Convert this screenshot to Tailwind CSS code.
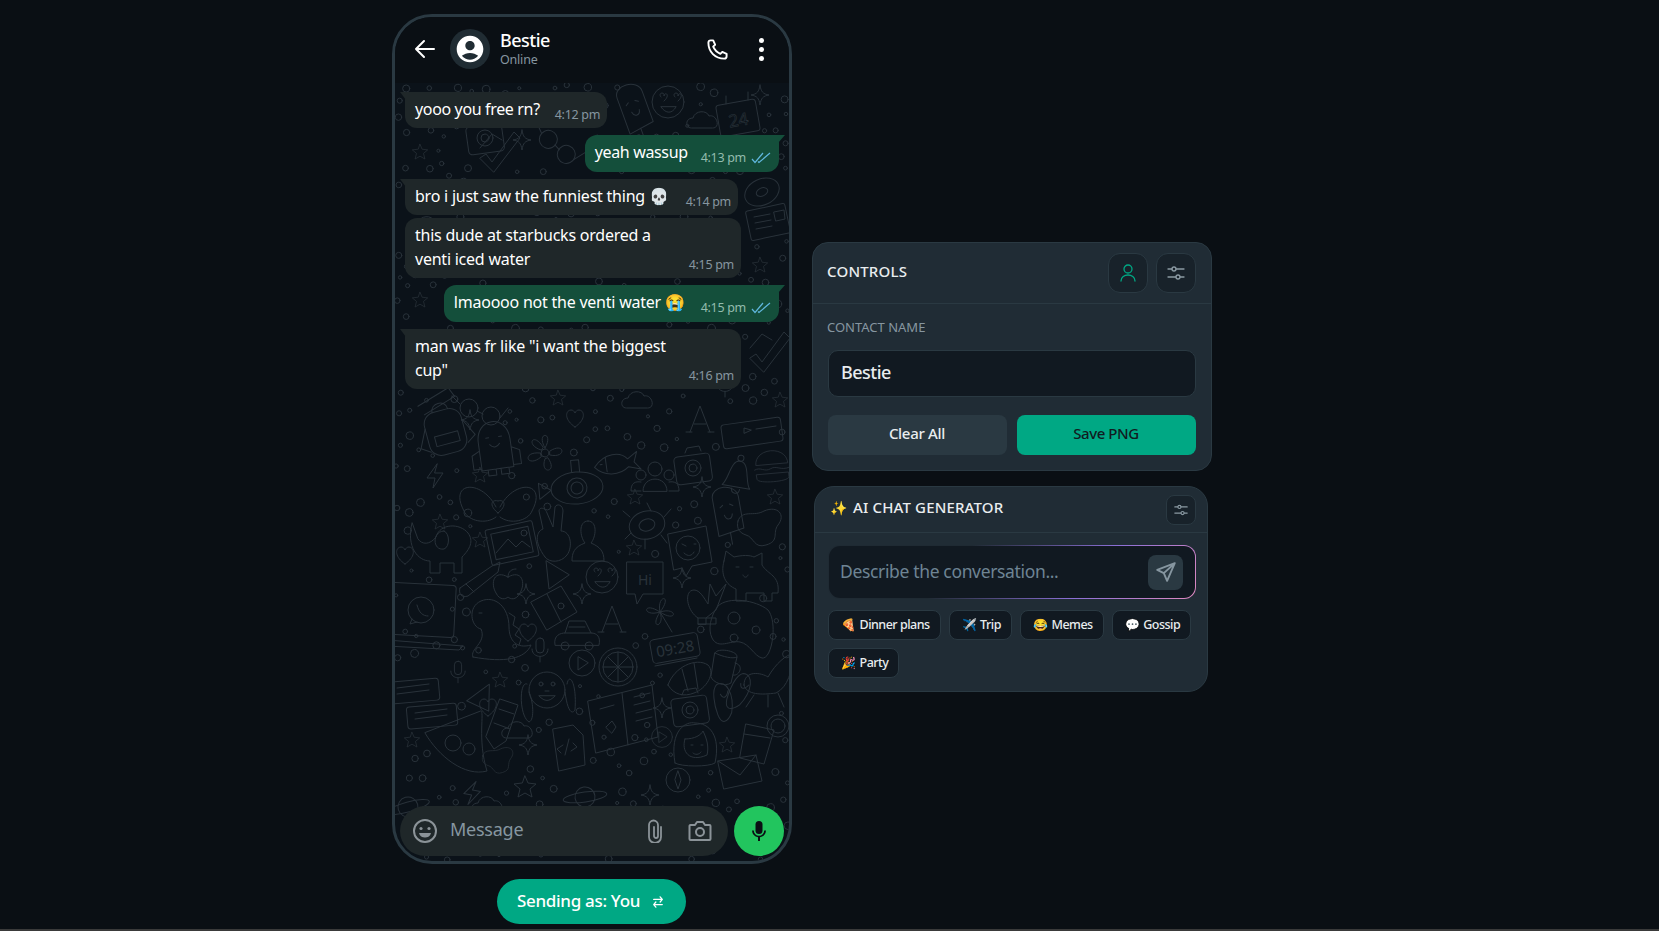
<!DOCTYPE html>
<html lang="en">
<head>
  <meta charset="UTF-8" />
  <meta name="viewport" content="width=device-width, initial-scale=1.0"/>
  <title>Fake Chat Generator</title>
  <script src="https://cdn.jsdelivr.net/npm/@tailwindcss/browser@4"></script>
</head>
<body class="bg-[#0a0f14] text-[#e9edef] font-['Noto_Sans',sans-serif] overflow-hidden">
  <div class="h-[929px] flex items-start gap-5 pl-[392px] pt-[14px]">

    <!-- Phone column -->
    <div class="w-[400px] flex flex-col">
      <div class="relative w-[400px] h-[850px] border-[3px] border-[#2a3942] rounded-[40px] overflow-hidden flex flex-col bg-[#0b1219]">
        <svg id="wallpaper" class="absolute inset-0" width="394" height="844" viewBox="395 17 394 844" fill="none" stroke="#29323a" stroke-width="1" stroke-linecap="round" stroke-linejoin="round">
          <defs>
            <g id="d-star"><path d="M0-11 3-4 11-3 5 2 7 10 0 6-7 10-5 2-11-3-3-4Z"/></g>
            <g id="d-spark"><path d="M0-10C1-3 3-1 9 0 3 1 1 3 0 10-1 3-3 1-9 0-3-1-1-3 0-10Z"/></g>
            <g id="d-heart"><path d="M0 9C-12 1-9-8-4-8-2-8-1-7 0-5 1-7 2-8 4-8 9-8 12 1 0 9Z"/></g>
            <g id="d-bag"><rect x="-19" y="-20" width="38" height="44" rx="12"/><path d="M-8-20C-8-30 8-30 8-20M-12 4H12V14H-12ZM-19-6-28 12-19 18M19-6 28 12 19 18M-20-30 14-40 18-30-16-20"/></g>
            <g id="d-ghost"><path d="M-16 22V-6C-16-32 16-32 16-6V22ZM-16 2-24 6V20L-16 20M16 2 24 6V20L16 20M-10 22V28H-2V22M3 22V28H11V22"/><path d="M-8-10H-5M5-10H8M-5-3C-2 1 2 1 5-3"/></g>
            <g id="d-flower"><path d="M0-5C-10-22 10-22 0-5ZM5-2C20-12 22 6 5 2ZM3 5C14 20-6 22 0 6ZM-4 4C-18 16-24-2-5 0ZM-4-3C-20-8-12-22-2-6Z"/><circle r="4"/></g>
            <g id="d-fish"><path d="M-18 2C-6-12 10-10 16-2L26-8 22 2 28 10 16 6C6 14-10 12-18 2ZM-6-6V8M-12 0H-10"/></g>
            <g id="d-people"><circle cy="-8" r="7"/><circle cx="-14" cy="-2" r="5"/><circle cx="14" cy="-2" r="5"/><path d="M-12 14C-12-2 12-2 12 14ZM-14 14H-24C-24 6-20 4-14 5M14 14H24C24 6 20 4 14 5"/></g>
            <g id="d-cam"><rect x="-18" y="-13" width="36" height="28" rx="4" transform="rotate(-8)"/><circle r="8"/><circle r="4"/><path d="M-8-15-6-20 6-22 8-17"/></g>
            <g id="d-burger"><path d="M-20-4C-20-26 20-26 20-4ZM-22 2C-14-2-10 6-2 2 6-2 10 6 22 2M-20 8H20V14C20 20-20 20-20 14Z"/></g>
            <g id="d-bell"><path d="M-14 12C-8 6-10-14 0-14 10-14 8 6 14 12ZM-4 14C-4 20 4 20 4 14"/><circle cy="-17" r="3"/></g>
            <g id="d-hands"><path d="M-2 4C-16-24-50-22-34 8-30 18-12 22-2 14M2 4C16-24 50-22 34 8 30 18 12 22 2 14"/><path d="M0 10C-10 2-6-4 0-2 6-4 10 2 0 10Z"/></g>
            <g id="d-sub"><ellipse rx="26" ry="16"/><circle r="10"/><circle r="6"/><path d="M-4-16V-28H4V-16M-26 0-38-8V8Z"/></g>
            <g id="d-pop"><path d="M-10 22V-16C-10-30 16-28 16-14V18ZM2 20V32"/><path d="M-4-6-1-8M6-8 9-6M-1 2C0 8 6 8 7 2"/></g>
            <g id="d-splat"><path d="M-22-6C-18-18-6-10 4-16 18-22 26-12 18-2 12 6 20 14 6 18-6 22-6 10-14 8-20 6-24 2-22-6Z"/></g>
            <g id="d-dog"><path d="M-28-24C-34 0-22 14-10 14V26H0V16H14V26H22V10C30 2 34-6 28-14 20-24 0-24-4-10-10-2-18-2-22-8Z"/><path d="M4-16C-8-16-8 4 4 2 10 0 10-14 4-16Z"/></g>
            <g id="d-image"><rect x="-24" y="-18" width="48" height="36" rx="2" transform="rotate(-12)"/><rect x="-19" y="-13" width="38" height="26" transform="rotate(-12)"/><path d="M-16 10-4-4 4 4 10-2 18 4"/><circle cx="12" cy="-10" r="3"/></g>
            <g id="d-peace"><path d="M-12 20C-24 4-20-6-14-8L-18-26C-18-30-12-30-10-24L-4-10 -2-30C0-34 6-32 6-26L4-6C14-6 16 10 10 18 4 26-8 26-12 20Z"/></g>
            <g id="d-person"><path d="M0-22C-10-22-8-6 -3 0-14 4-16 10-16 18H16C16 8 12 4 3 0 8-6 10-22 0-22Z"/></g>
            <g id="d-turtle"><ellipse rx="18" ry="14" transform="rotate(-15)"/><ellipse rx="8" ry="6" transform="rotate(-15)"/><path d="M-17-8-24-14M17-8 24-16M-16 8-22 14M14 10 20 18M4-14 0-22M-2 14V24"/></g>
            <g id="d-wink"><path d="M-20-16 18-24 24 12 4 16-2 26-6 18-14 20Z"/><circle cy="-2" r="12"/><path d="M-6-6-2-4M6-6H8M-4 3C0 7 4 6 6 2"/></g>
            <g id="d-cat"><path d="M-24-14-22-24-14-18C-6-20 2-20 6-18L14-22 14-10C20 0 32 0 30 18H24V26H16V18H-2V26H-12V14C-22 10-28 0-24-14Z"/><path d="M-12-8H-9M2-8H5M-5 0C-4 3-1 3 0 0"/></g>
            <g id="d-pencil"><path d="M-22 10 10-12 18-16 16-6-14 18C-20 20-24 16-22 10ZM-16 6-8 14"/></g>
            <g id="d-apple"><path d="M0-6C-14-14-18 0-12 10-8 18-2 16 0 14 2 16 8 18 12 10 18 0 14-14 0-6ZM0-6C0-12 4-14 8-14"/></g>
            <g id="d-arrow"><path d="M-9-16-6 12 14-2Z"/></g>
            <g id="d-love"><circle r="16"/><path d="M-7-5C-11-9-3-11-4-6-3-11 3-7-4-1M7-5C3-9 11-11 10-6 11-11 17-7 10-1M-7 5C-2 12 4 12 8 5Z"/></g>
            <g id="d-hi"><path d="M-18-18H18V14H-2L-8 24-10 14H-18Z" /><text x="0" y="5" text-anchor="middle" font-size="14" fill="#29323a" stroke="none">Hi</text></g>
            <g id="d-ok"><path d="M-10 24V18C-22 10-24-10-14-10-8-10-4-2 0 4L2-16 8-4 18-16 8 10 -2 18V24ZM-10 24H8V18H-10"/></g>
            <g id="d-laptop"><rect x="-34" y="-26" width="64" height="52" rx="3" transform="rotate(3)"/><path d="M-38 30 38 36 34 40-38 36Z"/><circle cx="-4" r="13"/><path d="M-13 9-15 14-8 12M-8-5C-6 3-2 6 3 6"/></g>
            <g id="d-dino"><path d="M-22 30C-26 22-8 16-14 2-24 0-28-20-14-26 0-32 14-20 14 0 14 14 22 22 36 18 30 32 10 36-22 30Z"/><path d="M14-14 20-10 18-2 24 2 20 8 26 12 24 18M-16-14H-13"/></g>
            <g id="d-map"><path d="M-24-6 6-22 22 4-8 22ZM-8-14 6 14"/><circle cx="6" cy="-2" r="3"/></g>
            <g id="d-lett"><path d="M-10 12 0-14 10 12M-6 4H6M-8 12H-14M8 12H14"/></g>
            <g id="d-clover"><path d="M0 0C-4-18 14-18 0 0ZM0 0C18-6 18 12 0 0ZM0 0C6 16-12 18 0 0ZM0 0C-18 6-18-12 0 0ZM0 0 12 20"/></g>
            <g id="d-pad"><path d="M-24-24C-14-34 14-30 26-20 36-8 30 30 20 28 12 26 8 14-2 12-12 10-24 20-30 8-34 0-32-14-24-24Z"/><circle cx="-8" cy="-12" r="6"/><circle cx="-8" cy="8" r="4"/><circle cx="14" cy="0" r="4"/></g>
            <g id="d-car"><path d="M-22 10C-24 0-16-2-12-2L-8-14H8L14-2C20-2 24 2 22 10ZM-8-8H8M-12-2H14"/><circle cx="-12" cy="11" r="4"/><circle cx="12" cy="11" r="4"/></g>
            <g id="d-clock"><rect x="-24" y="-12" width="48" height="24" rx="4" transform="rotate(-10)"/><text x="0" y="6" text-anchor="middle" font-size="15" fill="#29323a" stroke="none" transform="rotate(-10)">09:28</text><path d="M-20 18 22 10"/></g>
            <g id="d-cup"><path d="M-10-14C-2-10 8-8 12-10L6 16C0 20-12 16-14 10ZM-10-14C-8-20 14-16 12-10M10-4C20-2 14 10 8 8"/></g>
            <g id="d-cro"><path d="M-22 8C-16-10 6-20 18-12 26-4 16 12 4 16-6 20-16 18-22 8ZM-8-8-2 14M4-14 8 12"/></g>
            <g id="d-chair"><path d="M-24 8C-24-8-6-4 0 0 8-14 18-22 26-24 24-6 20 10 8 16-6 18-22 18-24 8ZM-14 18-22 30M10 16 16 30M0 18V30"/></g>
            <g id="d-monkey"><circle r="18"/><path d="M-20-6C-28-10-28 26-18 32-12 30-14 10-18 2M20-6C22-18 30-8 28 20 24 26 20 18 18 2"/><circle cx="-6" cy="-6" r="2"/><circle cx="6" cy="-6" r="2"/><path d="M-8 6C-2 12 2 12 8 6ZM-2 1H2"/></g>
            <g id="d-lemon"><circle r="19"/><circle r="15"/><path d="M-15 0H15M0-15V15M-10-10 10 10M10-10-10 10"/></g>
            <g id="d-play"><circle r="13"/><path d="M-4-6V7L6 0Z"/></g>
            <g id="d-book"><path d="M-34-12 30-28 36 24-26 40ZM0-20 6 32"/><path d="M-22-4-8-8M12-16 28-20M12-8 28-12M14 0 30-4M14 8 30 4M-16 14-10 8-6 14-10 20Z"/></g>
            <g id="d-flip"><path d="M-8-20C2-24 8-8 2 10-4 20-10 20-12 10-14 0-14-16-8-20ZM-6-10C-4-4 0-6 2-12"/></g>
            <g id="d-girl"><path d="M-20 20C-26-14-8-22 0-20 14-20 26-8 20 20 14 24-14 24-20 20Z"/><path d="M-10-4C0-4 6-8 8-12 12-4 14 4 12 12-6 20-14 8-10-4ZM-4 2H-2M6 2H8M-2 10C0 12 4 12 6 9"/></g>
            <g id="d-drink"><path d="M-12-16 16-10 6 24-18 18Z"/><path d="M-14-6 12-2"/><circle cx="20" cy="-14" r="11"/><circle cx="20" cy="-14" r="7"/></g>
            <g id="d-pizza"><path d="M-30-14C-16 10 10 30 32 24 22-8 30-36 26-36Z"/><circle cx="-2" cy="-4" r="8"/><circle cx="14" cy="2" r="6"/></g>
            <g id="d-tube"><path d="M-2-24 16-18 4 18-8 26-16 14ZM-3-14 12-9M-8 0 8 6"/></g>
            <g id="d-msg"><rect x="-26" y="-10" width="50" height="22" rx="3" transform="rotate(-5)"/><path d="M-18-2 14-6M-18 4 14 0"/></g>
            <g id="d-code"><path d="M-14-18 6-22 16-12 18 18-8 24ZM-6 6-10 2-4-2M6-4 10 0 4 4M-2 8 2-8"/></g>
            <g id="d-planet"><circle r="10"/><ellipse rx="22" ry="5"/></g>
            <g id="d-env"><path d="M-20-12 18-18 24 8-14 16ZM-20-12 2 2 18-18"/></g>
            <g id="d-compass"><circle r="12"/><path d="M0-9 3 0 0 9-3 0Z"/></g>
            <g id="d-bolt"><path d="M2-12-8 2H0L-2 12 8-3H0Z"/></g>
            <g id="d-cal"><rect x="-20" y="-16" width="40" height="32" rx="3" transform="rotate(-10)"/><text y="8" text-anchor="middle" font-size="17" fill="none" stroke="#29323a" stroke-width=".6" transform="rotate(-10)">24</text><path d="M-12-22V-14M10-26V-18"/></g>
            <g id="d-donut"><ellipse rx="18" ry="13" transform="rotate(-25)"/><ellipse rx="6" ry="4" transform="rotate(-25)"/></g>
            <g id="d-news"><rect x="-20" y="-15" width="40" height="30" rx="2" transform="rotate(-12)"/><path d="M-14-5 2-8M-13 1 3-2M-12 7 4 4M6-10 16-12 17-3 8-1Z"/></g>
            <g id="d-glass"><circle cx="-11" cy="-2" r="9"/><circle cx="11" cy="6" r="9"/><path d="M-3 1 3 4M-20-6-28-14M20 8 28-2"/></g>
            <g id="d-check"><path d="M-20 8-14 4-8 12 14-18 20-12-6 22ZM-20-2-8-16 2-10"/></g>
            <g id="d-player"><rect x="-30" y="-12" width="60" height="24" rx="3" transform="rotate(-8)"/><path d="M-8 0V-5L-1-3ZM4-4 24-7"/></g>
            <g id="d-mic"><rect x="-4" y="-12" width="8" height="15" rx="4"/><path d="M-8-1C-8 9 8 9 8-1M0 7V12"/></g>
            <g id="d-cloud"><path d="M-14 8C-20 8-20-2-12-2-10-10 2-10 4-4 12-6 16 8 8 8Z"/></g>
          </defs>
          <g id="doodles"></g>
        </svg>

        <!-- Header -->
        <header class="relative h-[66px] shrink-0 bg-[#0a0f14] flex items-center pl-5 pr-[25px] pb-[2px]">
          <svg class="w-6 h-6 -ml-[2px]" viewBox="0 0 24 24" fill="none" stroke="#fff" stroke-width="2" stroke-linecap="round" stroke-linejoin="round"><path d="M21 12H3M11 4l-8 8 8 8"/></svg>
          <div class="ml-[13px] w-10 h-10 rounded-full bg-[#202c33] flex items-center justify-center">
            <svg class="w-8 h-8" viewBox="0 0 24 24" fill="#fff"><path d="M12 2C6.48 2 2 6.48 2 12s4.48 10 10 10 10-4.48 10-10S17.52 2 12 2zm0 4c1.93 0 3.5 1.57 3.5 3.5S13.93 13 12 13s-3.5-1.57-3.5-3.5S10.07 6 12 6zm0 14c-2.03 0-4.43-.82-6.14-2.88C7.55 15.8 9.68 15 12 15s4.45.8 6.14 2.12C16.43 19.18 14.03 20 12 20z"/></svg>
          </div>
          <div class="ml-[10px] -mt-[2px] flex flex-col gap-px">
            <span class="text-[18px] leading-[22px] font-medium tracking-[-0.5px] text-white">Bestie</span>
            <span class="text-[12.5px] leading-4 tracking-[-0.2px] text-[#8696a0]">Online</span>
          </div>
          <svg class="ml-auto w-[23px] h-[23px]" viewBox="0 0 24 24" fill="none" stroke="#fff" stroke-width="2" stroke-linejoin="round"><path d="M5 2.500h2.500l2 4.500-2 2c1.500 3.500 4 6 7.500 7.500l2-2 4.500 2v2.500c0 1.500-1 2.500-2.500 2.500C9.500 21.500 2.500 14.500 2.500 5c0-1.500 1-2.500 2.500-2.500z"/></svg>
          <div class="ml-[30px] flex flex-col gap-1">
            <span class="w-[5px] h-[5px] rounded-full bg-white"></span>
            <span class="w-[5px] h-[5px] rounded-full bg-white"></span>
            <span class="w-[5px] h-[5px] rounded-full bg-white"></span>
          </div>
        </header>

        <!-- Messages -->
        <div class="relative flex-1 flex flex-col items-start px-[10px] pt-[9px] text-[16px] leading-6 tracking-[-0.23px] text-white">
          <div class="relative max-w-[336px] flex items-end gap-[15px] bg-[#1f2729] rounded-xl rounded-tl-none pl-[10px] pr-[7px] pt-[5px] pb-[7px]">
            <span class="absolute -left-[5px] top-0 w-[6px] h-[8px] bg-[#1f2729] [clip-path:polygon(0_0,100%_0,100%_100%)]"></span>
            <span class="tracking-[-0.35px]">yooo you free rn?</span>
            <span class="shrink-0 text-[12.5px] leading-4 tracking-[-0.3px] -mb-[2px] text-[#8696a0]">4:12 pm</span>
          </div>

          <div class="relative self-end mt-[7px] max-w-[340px] flex items-end gap-[13px] bg-[#144f3b] rounded-xl rounded-tr-none pl-[10px] pr-2 pt-[5px] pb-2">
            <span class="absolute -right-[6px] top-0 w-[7px] h-[8px] bg-[#144f3b] [clip-path:polygon(0_0,100%_0,0_100%)]"></span>
            <span class="tracking-[-0.35px]">yeah wassup</span>
            <span class="shrink-0 flex items-center gap-[5px] text-[12.5px] leading-4 tracking-[-0.3px] -mb-[2px] text-[#93bcae]">4:13 pm
              <svg class="w-5 h-3" viewBox="0 0 20 12" fill="none" stroke="#5fb6dc" stroke-width="1.200"><path d="M1 7l3 3.500L12 1M7 9.500L8 10.500 19 1"/></svg>
            </span>
          </div>

          <div class="relative mt-[7px] max-w-[336px] flex items-end gap-[17px] bg-[#1f2729] rounded-xl rounded-tl-none pl-[10px] pr-[7px] pt-[5px] pb-[7px]">
            <span class="absolute -left-[5px] top-0 w-[6px] h-[8px] bg-[#1f2729] [clip-path:polygon(0_0,100%_0,100%_100%)]"></span>
            <span>bro i just saw the funniest thing 💀</span>
            <span class="shrink-0 text-[12.5px] leading-4 tracking-[-0.3px] -mb-[2px] text-[#8696a0]">4:14 pm</span>
          </div>

          <div class="mt-[3px] w-[336px] flex items-end gap-[15px] bg-[#1f2729] rounded-xl pl-[10px] pr-[7px] pt-[5px] pb-[7px]">
            <span>this dude at starbucks ordered a venti iced water</span>
            <span class="shrink-0 text-[12.5px] leading-4 tracking-[-0.3px] -mb-[2px] text-[#8696a0]">4:15 pm</span>
          </div>

          <div class="relative self-end mt-[7px] max-w-[340px] flex items-end gap-4 bg-[#144f3b] rounded-xl rounded-tr-none pl-[10px] pr-2 pt-[5px] pb-2">
            <span class="absolute -right-[6px] top-0 w-[7px] h-[8px] bg-[#144f3b] [clip-path:polygon(0_0,100%_0,0_100%)]"></span>
            <span>lmaoooo not the venti water 😭</span>
            <span class="shrink-0 flex items-center gap-[5px] text-[12.5px] leading-4 tracking-[-0.3px] -mb-[2px] text-[#93bcae]">4:15 pm
              <svg class="w-5 h-3" viewBox="0 0 20 12" fill="none" stroke="#5fb6dc" stroke-width="1.200"><path d="M1 7l3 3.500L12 1M7 9.500L8 10.500 19 1"/></svg>
            </span>
          </div>

          <div class="relative mt-[7px] w-[336px] flex items-end gap-[15px] bg-[#1f2729] rounded-xl rounded-tl-none pl-[10px] pr-[7px] pt-[5px] pb-[7px]">
            <span class="absolute -left-[5px] top-0 w-[6px] h-[8px] bg-[#1f2729] [clip-path:polygon(0_0,100%_0,100%_100%)]"></span>
            <span>man was fr like "i want the biggest cup"</span>
            <span class="shrink-0 text-[12.5px] leading-4 tracking-[-0.3px] -mb-[2px] text-[#8696a0]">4:16 pm</span>
          </div>
        </div>

        <!-- Input bar -->
        <div class="relative flex gap-[6px] px-[5px] pb-[5px]">
          <div class="flex-1 h-[50px] rounded-full bg-[#1f2729] flex items-center pl-[13px] pr-4">
            <svg class="w-6 h-6" viewBox="0 0 24 24" fill="none" stroke="#8b9398" stroke-width="2"><circle cx="12" cy="12" r="11"/><circle cx="8" cy="9.5" r="1.6" fill="#8b9398" stroke="none"/><circle cx="16" cy="9.5" r="1.6" fill="#8b9398" stroke="none"/><path d="M6 14h12c-1 6-11 6-12 0z" fill="#8b9398" stroke="none"/></svg>
            <span class="ml-[13px] -mt-[4px] text-[18px] tracking-[-0.25px] text-[#8696a0]">Message</span>
            <svg class="ml-auto w-4 h-6" viewBox="0 0 16 24" fill="none" stroke="#8b9398" stroke-width="1.800" stroke-linecap="round"><path d="M14 8v10a6 6 0 0 1-12 0V6a4.500 4.500 0 0 1 9 0v11a2 2 0 0 1-4 0V8"/></svg>
            <svg class="ml-[25px] w-6 h-6" viewBox="0 0 24 24" fill="none" stroke="#8b9398" stroke-width="2" stroke-linejoin="round"><path d="M1.500 7a1 1 0 0 1 1-1h4.500l2-3h6l2 3h4.500a1 1 0 0 1 1 1v13a1 1 0 0 1-1 1h-19a1 1 0 0 1-1-1z"/><circle cx="12" cy="13" r="4"/></svg>
          </div>
          <div class="w-[50px] h-[50px] rounded-full bg-[#22c55e] flex items-center justify-center">
            <svg class="w-6 h-6" viewBox="0 0 24 24" fill="#0a0f14"><rect x="8.500" y="2" width="7" height="13" rx="3.500"/><path d="M5 11.500h1.800a5.200 5.200 0 0 0 10.400 0H19a7 7 0 0 1-6 6.800V22h-2v-3.700a7 7 0 0 1-6-6.800z"/></svg>
          </div>
        </div>
      </div>

      <button class="mt-[15px] ml-[105px] w-[189px] h-[45px] rounded-full bg-[#00a884] flex items-center justify-center gap-3 text-[17px] font-medium tracking-[-0.3px] text-white">
        <span class="-mt-px -ml-[2px]">Sending as: You</span>
        <svg class="w-3 h-[14px]" viewBox="0 0 14 16" fill="none" stroke="#fff" stroke-width="1.500" stroke-linecap="round" stroke-linejoin="round"><path d="M2 5h10M9.500 2L12 5 9.500 8M12 11H2M4.500 8L2 11 4.500 14"/></svg>
      </button>
    </div>

    <!-- Side column -->
    <div class="w-[400px] mt-[228px] flex flex-col items-start gap-[15px]">
      <section class="w-[400px] bg-[#202c35] border border-[#2a3942] rounded-2xl">
        <div class="h-[61px] border-b border-[#2a3942] flex items-center px-[15px]">
          <h2 class="-mt-[3px] -ml-px text-[15px] font-medium tracking-[0.2px] text-[#e9edef]">CONTROLS</h2>
          <button class="ml-auto w-10 h-10 rounded-xl bg-[#18222a] border border-[#2a3942] flex items-center justify-center">
            <svg class="w-[18px] h-[18px]" viewBox="0 0 18 18" fill="none" stroke="#00a884" stroke-width="1.300" stroke-linecap="round"><circle cx="9" cy="5" r="4"/><path d="M2 17c0-8 14-8 14 0"/></svg>
          </button>
          <button class="ml-2 w-10 h-10 rounded-xl bg-[#18222a] border border-[#2a3942] flex items-center justify-center">
            <svg class="w-[18px] h-[18px]" viewBox="0 0 18 18" fill="none" stroke="#8b9aa3" stroke-width="1.300" stroke-linecap="round"><path d="M1 5h4M9 5h8M1 13h8M13 13h4"/><circle cx="7" cy="5" r="2"/><circle cx="11" cy="13" r="2"/></svg>
          </button>
        </div>
        <div class="px-[15px] pt-[13px] pb-[15px]">
          <label class="block -ml-px text-[13px] leading-[20px] text-[#8696a0]">CONTACT NAME</label>
          <div class="mt-[13px] h-[47px] rounded-[10px] bg-[#111921] border border-[#2a3942] flex items-center pl-3 text-[18px] font-medium tracking-[-0.5px] text-[#e9edef]"><span class="-mt-[3px]">Bestie</span></div>
          <div class="mt-[18px] flex gap-[10px]">
            <button class="flex-1 h-10 rounded-lg bg-[#2a3942] text-[15px] font-medium tracking-[-0.3px] text-[#e9edef]"><span class="block -mt-[3px] -ml-px">Clear All</span></button>
            <button class="flex-1 h-10 rounded-lg bg-[#00a884] text-[15px] font-medium tracking-[-0.4px] text-[#111b21]"><span class="block -mt-[3px] -ml-px">Save PNG</span></button>
          </div>
        </div>
      </section>

      <section class="ml-[2px] w-[394px] bg-[#202c35] border border-[#2a3942] rounded-[20px]">
        <div class="h-[46px] border-b border-[#2a3942] flex items-center pl-[15px] pr-[11px]">
          <span class="-mt-[4px] text-[14px] leading-none">✨</span>
          <h2 class="ml-[6px] -mt-[5px] text-[15px] font-medium tracking-[0.15px] text-[#e9edef]">AI CHAT GENERATOR</h2>
          <button class="ml-auto w-[30px] h-[30px] rounded-lg bg-[#18222a] border border-[#2a3942] flex items-center justify-center">
            <svg class="w-[14px] h-[14px]" viewBox="0 0 18 18" fill="none" stroke="#8b9aa3" stroke-width="1.400" stroke-linecap="round"><path d="M1 5h4M9 5h8M1 13h8M13 13h4"/><circle cx="7" cy="5" r="2"/><circle cx="11" cy="13" r="2"/></svg>
          </button>
        </div>
        <div class="pl-[13px] pr-[11px] pt-3 pb-[13px]">
          <div class="h-[54px] rounded-xl border border-transparent [background:linear-gradient(#111921,#111921)_padding-box,linear-gradient(130deg,#1f2a33_35%,#8b6fd6_70%,#e08ac0_100%)_border-box] flex items-center pl-[11px] pr-3">
            <span class="-mt-[2px] text-[17.500px] tracking-[-0.35px] text-[#6e8494]">Describe the conversation...</span>
            <button class="ml-auto w-[35px] h-[35px] rounded-lg bg-[#2a3942] flex items-center justify-center">
              <svg class="w-[22px] h-[22px]" viewBox="0 0 20 20" fill="none" stroke="#8696a0" stroke-width="1.700" stroke-linejoin="round"><path d="M18 2L2 8l6 3 3 7zM18 2L8 11"/></svg>
            </button>
          </div>
          <div class="mt-[11px] flex flex-wrap gap-2 text-[12.500px] tracking-[-0.5px] font-medium text-[#e9edef]">
            <span class="h-[30px] rounded-lg bg-[#111921] border border-[#2a3942] flex items-center gap-1 pl-3 pr-[10px]"><span class="text-[12px]">🍕</span>Dinner plans</span>
            <span class="h-[30px] rounded-lg bg-[#111921] border border-[#2a3942] flex items-center gap-1 pl-3 pr-[10px]"><span class="text-[12px]">✈️</span>Trip</span>
            <span class="h-[30px] rounded-lg bg-[#111921] border border-[#2a3942] flex items-center gap-1 pl-3 pr-[10px]"><span class="text-[12px]">😂</span>Memes</span>
            <span class="h-[30px] rounded-lg bg-[#111921] border border-[#2a3942] flex items-center gap-1 pl-3 pr-[10px]"><span class="text-[12px]">💬</span>Gossip</span>
            <span class="h-[30px] rounded-lg bg-[#111921] border border-[#2a3942] flex items-center gap-1 pl-3 pr-[10px]"><span class="text-[12px]">🎉</span>Party</span>
          </div>
        </div>
      </section>
    </div>
  </div>
  <div class="h-[2px] bg-[#3a3a3a]"></div>

  <script>
    // wallpaper doodles: [name, x, y, rotation, scale]
    const items = [
      ['bag',445,430,-15],['ghost',495,447,-8],['flower',545,453,0],['fish',612,463,-8],['people',655,477,0],['cam',693,468,0],['burger',772,467,-5,.8],['bell',738,475,10],
      ['hands',498,503,0],['sub',577,488,-5],['pop',725,513,-10],['splat',760,527,0],['dog',440,547,0],['image',512,543,0],['peace',557,537,0],['person',588,543,0],['turtle',647,525,0],['wink',688,550,0],['cat',748,575,0],
      ['pencil',482,578,0],['apple',508,583,0],['arrow',555,577,0],['love',602,577,0],['hi',645,580,0],['ok',708,600,0],['laptop',425,610,0],['dino',495,627,0],['map',555,608,0],['lett',612,620,0],['clover',660,612,0],['pad',742,630,0],['car',577,635,0],['clock',675,648,0],
      ['cup',725,667,0],['cro',690,677,0],['chair',768,677,0],['monkey',547,690,0],['lemon',618,667,0],['play',582,663,0],['book',622,713,0],['cam',690,710,0],['flip',728,703,-10],['flip',742,695,25],['girl',695,743,0],['drink',758,740,0],['pizza',455,747,0],['tube',502,723,0],['msg',415,690,0],['msg',433,715,0],['code',567,747,0],
      ['planet',585,797,-8],['planet',408,807,-15],['env',738,773,0],['compass',678,780,0],['bolt',472,793,10],['star',525,787,0],['cloud',490,805,0],['cloud',680,820,0],['spark',650,795,0],
      ['love',668,102,0],['cal',738,118,0],['donut',762,192,0],['news',768,222,0],['glass',558,145,20],['cam',485,138,0],['star',420,152,0,.7],['check',500,150,0],['spark',522,140,0],['cloud',705,120,0],['player',752,433,0],['star',780,400,0,.7],['cloud',430,225,0],['star',420,300,0,.7],['spark',760,300,0],['check',770,350,0],['pop',632,110,-20],['spark',760,95,0],['glass',480,410,0],['heart',575,418,0],['star',558,398,0,.7],['lett',700,420,0],['mic',725,385,0],['cloud',640,400,0],['star',760,265,0,.7],
      ['heart',405,555,0],['heart',528,632,0],['star',440,522,0,.7],['star',480,475,0,.7],['star',480,540,0,.7],['spark',470,420,0],['spark',526,594,0],['spark',582,594,0],['spark',682,578,0],['star',634,548,0,.7],['star',635,497,0,.7],['spark',702,487,0],['star',775,497,0,.7],['mic',540,650,0],['star',500,680,0,.7],['arrow',480,700,60],['spark',528,745,0],['spark',662,708,0],['star',727,745,0,.7],['bolt',435,476,0],['heart',488,707,0],['cloud',520,730,0],['splat',498,760,0,.7],['star',412,740,0,.7],['play',662,737,0,.8],['mic',458,672,0,.9]
    ];
    const host = document.getElementById('doodles');
    const ns = 'http://www.w3.org/2000/svg';
    const taken = [];
    items.forEach(([n, x, y, r, s]) => {
      const u = document.createElementNS(ns, 'use');
      u.setAttribute('href', '#d-' + n);
      u.setAttribute('transform', `translate(${x} ${y}) rotate(${r || 0}) scale(${s || 1})`);
      host.appendChild(u);
      taken.push([x, y, ['star','spark','heart','bolt','mic','cloud','play','arrow'].includes(n) ? 12 : 22]);
    });
    // little bubbles in the gaps
    let seed = 7;
    const rnd = () => (seed = (seed * 16807) % 2147483647) / 2147483647;
    for (let i = 0; i < 2200; i++) {
      const x = 396 + rnd() * 392, y = 85 + rnd() * 775, r = 1.5 + rnd() * 2.5;
      if (taken.some(t => Math.hypot(t[0] - x, t[1] - y) < t[2] + r + 2)) continue;
      taken.push([x, y, r + 4]);
      const c = document.createElementNS(ns, 'circle');
      c.setAttribute('cx', x); c.setAttribute('cy', y); c.setAttribute('r', r);
      host.appendChild(c);
    }
  </script>
</body>
</html>
